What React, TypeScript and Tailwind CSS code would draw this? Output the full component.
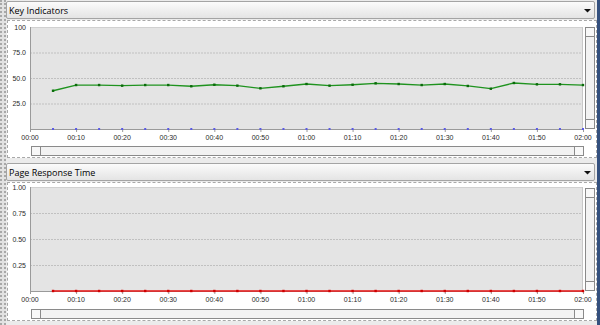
import React from "react";

const PLOT_X = 22;
const PLOT_W = 553;

const green = [
  37.5, 43.1, 43.1, 42.5, 43.1, 43.1, 41.9, 43.4, 42.5, 39.9, 41.9, 44.1,
  42.5, 43.4, 44.8, 44.1, 43.1, 44.1, 42.2, 39.5, 45.1, 43.8, 43.8, 43.1,
];

const xLabels = Array.from({ length: 13 }, (_, i) => {
  const m = i * 10;
  const h = Math.floor(m / 60);
  const mm = m % 60;
  return `0${h}:${mm.toString().padStart(2, "0")}`;
});

type ChartProps = {
  svgH: number;
  plotY: number;
  plotH: number;
  labelY: number;
  yLabels: string[];
  max: number;
  series: number[];
  lineColor: string;
  pointColor: string;
  baseColor?: string;
  vTop: string;
  vH: string;
  boxH: string;
};

function Chart(p: ChartProps) {
  const xAt = (i: number) => PLOT_X + ((i + 1) * PLOT_W) / 24;
  const yAt = (v: number) => p.plotY + p.plotH - (v / p.max) * p.plotH;
  const pts = p.series.map((v, i) => `${xAt(i)},${yAt(v)}`).join(" ");
  const bottom = p.plotY + p.plotH;
  return (
    <div className={`ml-[1px] mt-[1px] w-[590px] ${p.boxH} border border-dashed border-[#a8a8a8] bg-white flex flex-col`}>
      <div className="flex items-start">
        <svg
          width={576}
          height={p.svgH}
          className="block shrink-0 overflow-visible"
          style={{ fontFamily: '"Liberation Sans", Arial, sans-serif' }}
        >
          <rect x={PLOT_X} y={p.plotY} width={PLOT_W} height={p.plotH} fill="#e4e4e4" />
          {[0.25, 0.5, 0.75].map((f) => (
            <line
              key={f}
              x1={PLOT_X}
              x2={PLOT_X + PLOT_W}
              y1={p.plotY + p.plotH * (1 - f) + 0.5}
              y2={p.plotY + p.plotH * (1 - f) + 0.5}
              stroke="#c0c0c0"
              strokeDasharray="2 1"
            />
          ))}
          <line x1={PLOT_X} x2={PLOT_X + PLOT_W} y1={p.plotY + 0.5} y2={p.plotY + 0.5} stroke="#d0d0d0" />
          <line x1={PLOT_X + PLOT_W - 0.5} x2={PLOT_X + PLOT_W - 0.5} y1={p.plotY} y2={bottom} stroke="#c8c8c8" />
          <line x1={PLOT_X + 0.5} x2={PLOT_X + 0.5} y1={p.plotY} y2={bottom + 1} stroke="#9a9a9a" />
          <line x1={PLOT_X} x2={PLOT_X + PLOT_W} y1={bottom + 0.5} y2={bottom + 0.5} stroke="#9a9a9a" />
          {xLabels.map((_, i) => {
            const x = PLOT_X + (i * PLOT_W) / 12 + 0.5;
            return <line key={i} x1={x} x2={x} y1={bottom} y2={bottom + 3} stroke="#9a9a9a" />;
          })}
          {p.yLabels.map((t, i) => (
            <text
              key={t}
              x={18}
              y={p.plotY + (i * p.plotH) / 4 + 2.6}
              textAnchor="end"
              fontSize={7}
              fill="#2a2a2a"
            >
              {t}
            </text>
          ))}
          {xLabels.map((t, i) => (
            <text
              key={t}
              x={PLOT_X + (i * PLOT_W) / 12}
              y={p.labelY + 2.6}
              textAnchor="middle"
              fontSize={7}
              fill="#2a2a2a"
            >
              {t}
            </text>
          ))}
          {p.baseColor &&
            p.series.map((_, i) => (
              <rect key={i} x={xAt(i) - 1} y={bottom - 1} width={2} height={2} fill={p.baseColor} />
            ))}
          <polyline points={pts} fill="none" stroke={p.lineColor} strokeWidth={1.3} strokeLinejoin="round" />
          {p.series.map((v, i) => (
            <rect key={i} x={xAt(i) - 1.2} y={yAt(v) - 1.2} width={2.4} height={2.4} fill={p.pointColor} />
          ))}
        </svg>
        <div className={`ml-[1px] ${p.vTop} ${p.vH} w-[10px] border border-[#8a8a8a] bg-[#f2f2f2] flex flex-col justify-between`}>
          <div className="h-[9px] border-b border-[#8a8a8a] bg-[#f8f8f8]" />
          <div className="h-[9px] border-t border-[#8a8a8a] bg-[#f8f8f8]" />
        </div>
      </div>
      <div className="ml-[23px] mt-[1px] w-[553px] h-[10px] border border-[#8a8a8a] bg-[#f2f2f2] flex justify-between">
        <div className="w-[9px] border-r border-[#8a8a8a] bg-[#f8f8f8]" />
        <div className="w-[9px] border-l border-[#8a8a8a] bg-[#f8f8f8]" />
      </div>
    </div>
  );
}

function Header({ title, mt }: { title: string; mt: string }) {
  return (
    <div
      className={`${mt} mr-[2px] h-[18px] rounded-[2px] border border-[#a4a4a4] bg-gradient-to-b from-[#fbfbfb] to-[#e4e4e4] flex items-center justify-between pl-[2px] pr-[3px] text-[9px] text-black`}
      style={{ fontFamily: '"Open Sans", "Noto Sans", sans-serif' }}
    >
      <span className="leading-none">{title}</span>
      <svg width="7" height="5" viewBox="0 0 7 5" className="block">
        <path d="M0 1 L7 1 L3.5 4.5 Z" fill="#111" />
      </svg>
    </div>
  );
}

export default function App() {
  return (
    <div className="w-[600px] h-[325px] bg-[#ebebeb] flex overflow-hidden">
      <div className="w-[6px] h-full border-x-2 border-dotted border-[#a8a8a8] bg-[#e2e2e2]" />
      <div className="w-[591px] h-full flex flex-col">
        <Header title="Key Indicators" mt="mt-[1px]" />
        <Chart
          boxH="h-[138px]"
          svgH={124}
          plotY={6}
          plotH={102}
          labelY={116.5}
          yLabels={["100", "75.0", "50.0", "25.0"]}
          max={100}
          series={green}
          lineColor="#1f931f"
          pointColor="#0a6a0a"
          baseColor="#5a5ae6"
          vTop="mt-[6px]"
          vH="h-[102px]"
        />
        <Header title="Page Response Time" mt="mt-[5px]" />
        <Chart
          boxH="h-[139px]"
          svgH={125}
          plotY={4}
          plotH={104}
          labelY={116.3}
          yLabels={["1.00", "0.75", "0.50", "0.25"]}
          max={1}
          series={Array(24).fill(0)}
          lineColor="#e81010"
          pointColor="#d00000"
          vTop="mt-[5px]"
          vH="h-[103px]"
        />
      </div>
      <div className="w-[3px] h-full bg-[#34507e]" />
    </div>
  );
}
